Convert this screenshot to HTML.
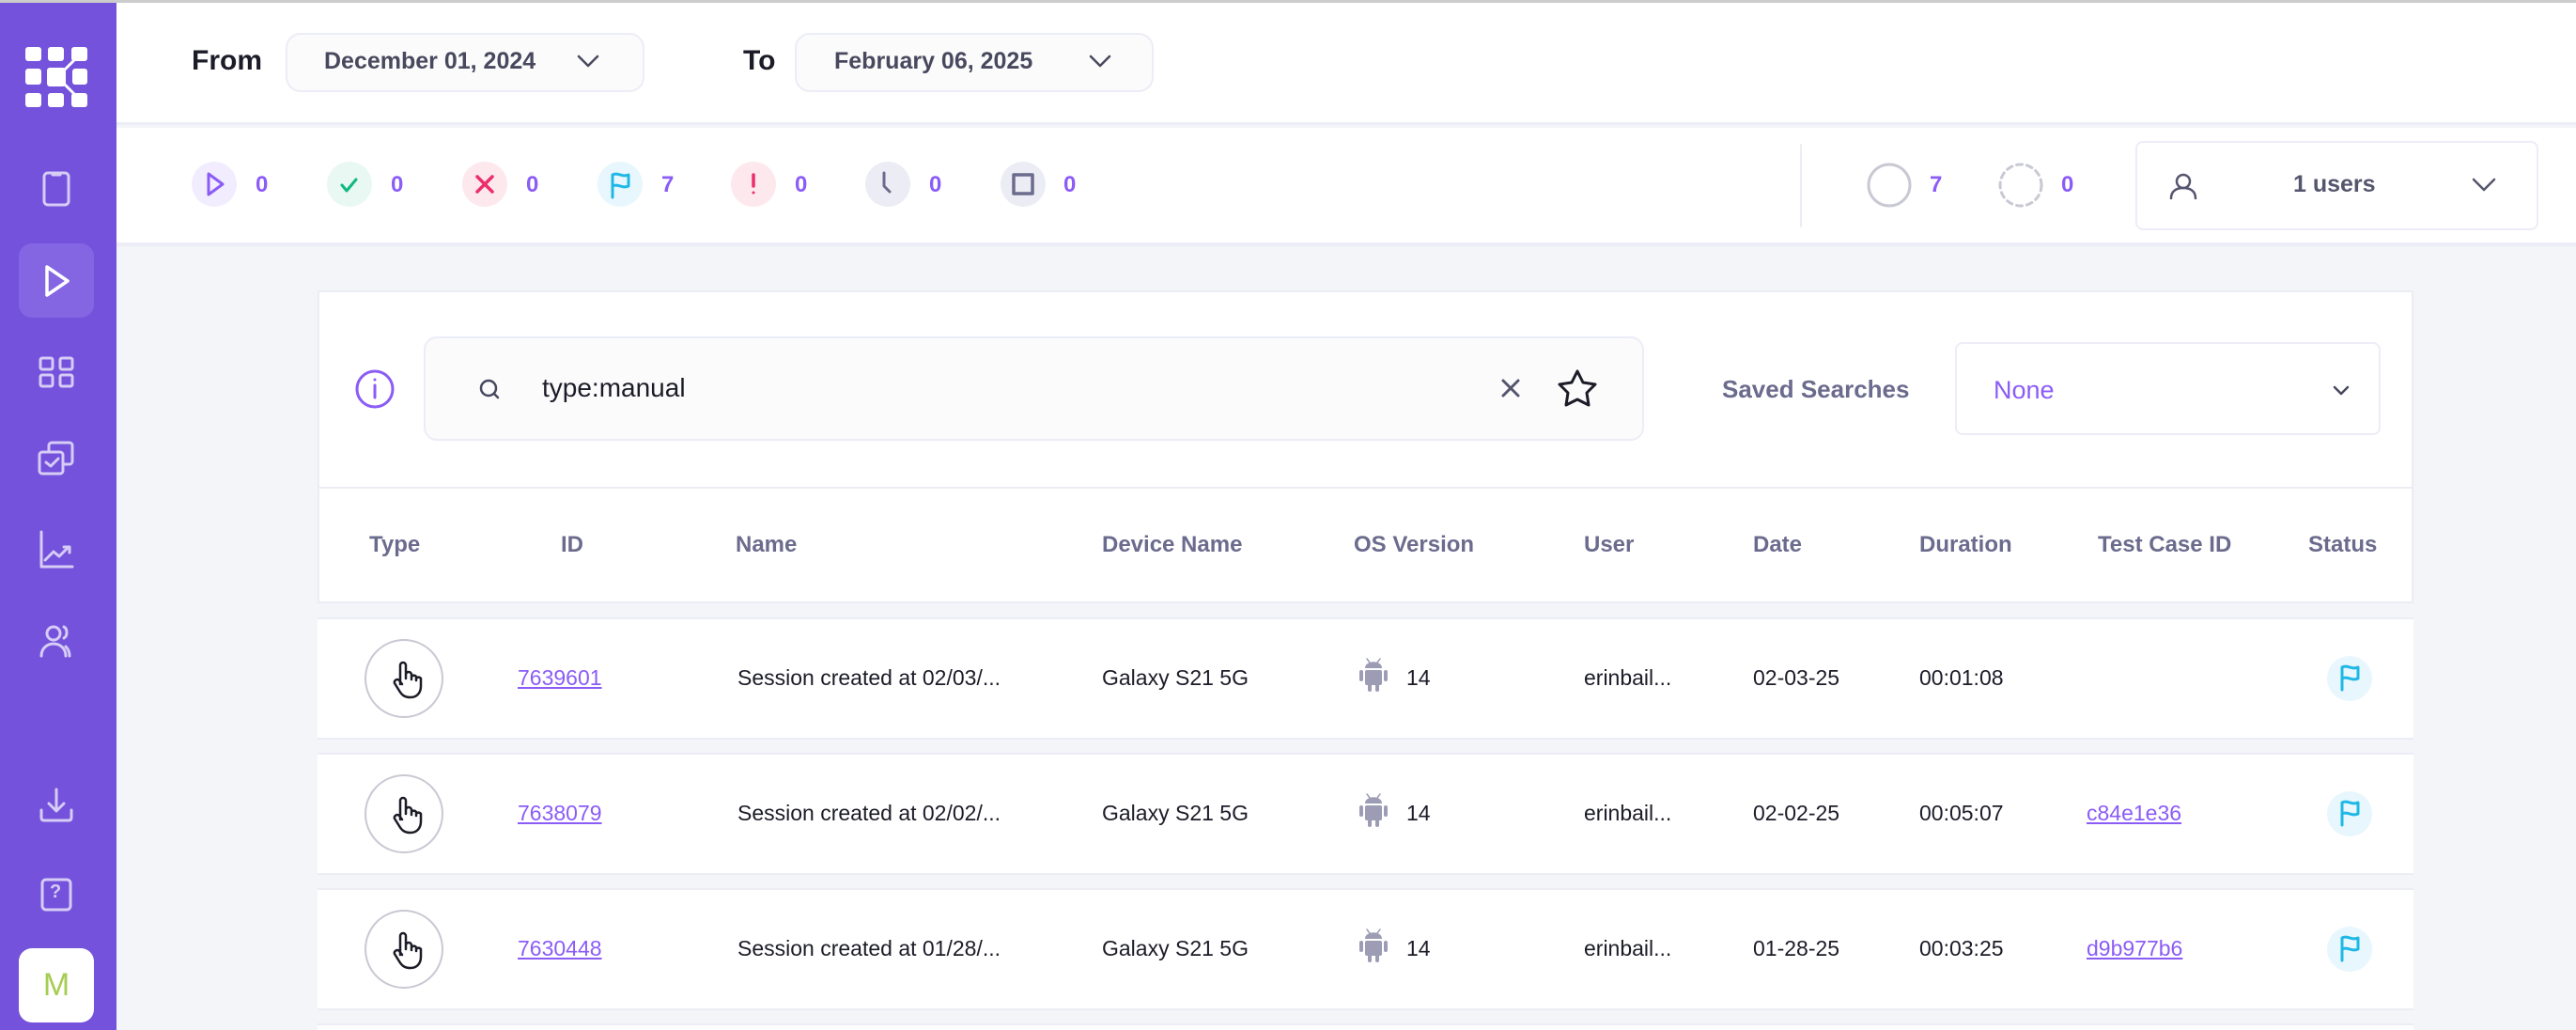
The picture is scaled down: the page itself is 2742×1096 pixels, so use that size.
<!DOCTYPE html>
<html style="width:2742px;height:1096px;overflow:hidden"><head><meta charset="utf-8"><style>
*{margin:0;padding:0;box-sizing:border-box}
body{width:2742px;height:1096px;overflow:hidden;background:#F4F5F9;font-family:"Liberation Sans",sans-serif;position:relative}
.a{position:absolute}
.sb{left:0;top:0;width:124px;height:1096px;background:#7452DC}
.t{position:absolute;white-space:nowrap}
.hdr{color:#6B6B8E;font-weight:bold;font-size:24px;top:566px}
.cell{font-size:23px;color:#1c1c28}
.lnk{color:#8B5CF6;text-decoration:underline;font-size:23px}
.row{position:absolute;left:338px;width:2231px;height:130px;background:#fff;border-top:2px solid #ECEDF4;border-bottom:2px solid #ECEDF4}
</style></head><body>
<div class="a" style="left:0;top:0;width:2742px;height:3px;background:#ccc;z-index:5"></div>
<div class="a" style="left:124px;top:0;width:2618px;height:133px;background:#fff;border-bottom:3px solid #ECEDF6"></div>
<div class="a" style="left:124px;top:136px;width:2618px;height:126px;background:#fff;border-bottom:4px solid #ECEDF6"></div>
<div class="a sb"></div>
<svg class="a" style="left:25px;top:48px" width="70" height="68" viewBox="0 0 70 68" fill="#fff">
<rect x="2" y="2" width="17" height="15" rx="3"/><rect x="26" y="2" width="17" height="15" rx="3"/><rect x="51" y="2" width="17" height="15" rx="3"/>
<rect x="2" y="25" width="17" height="17" rx="3"/><rect x="25" y="24" width="20" height="20" rx="3"/><rect x="52" y="25" width="16" height="17" rx="3"/>
<rect x="2" y="51" width="17" height="15" rx="3"/><rect x="26" y="51" width="17" height="15" rx="3"/><rect x="51" y="51" width="17" height="15" rx="3"/>
<path d="M44 26 L56 14 M44 42 L56 54" stroke="#fff" stroke-width="3"/></svg>
<svg class="a" style="left:0;top:0" width="124" height="1096" fill="none" stroke="#D6CCF6" stroke-width="3" stroke-linecap="round" stroke-linejoin="round">
<rect x="47" y="184" width="26" height="34" rx="4"/><path d="M56 186h8"/>
<rect x="20" y="259" width="80" height="79" rx="14" fill="#8466E2" stroke="none"/>
<path d="M50 284 L72 299 L50 314 Z" stroke="#fff" stroke-width="3.5"/>
<rect x="43" y="381" width="13" height="12" rx="2"/><rect x="64" y="381" width="13" height="12" rx="2"/><rect x="43" y="399" width="13" height="12" rx="2"/><rect x="64" y="399" width="13" height="12" rx="2"/>
<rect x="52" y="471" width="25" height="23" rx="3"/><rect x="42" y="481" width="25" height="23" rx="3" fill="#7452DC"/><path d="M49 492l5 4 8-8"/>
<path d="M44 566v37h33M48 596l9-9 6 5 10-10M68 582h6v6"/>
<circle cx="57" cy="674" r="7"/><path d="M44 698c0-8 6-13 13-13s13 5 13 13M68 667c4 2 4 10 0 12M74 698c0-5-2-8-4-10"/>
<path d="M60 840v22M52 855l8 8 8-8M44 862v8c0 2 1 3 3 3h26c2 0 3-1 3-3v-8"/>
<rect x="45" y="936" width="30" height="32" rx="4"/>
</svg>
<div class="t" style="left:53px;top:938px;font-size:20px;color:#D6CCF6;font-weight:bold">?</div>
<div class="a" style="left:20px;top:1009px;width:80px;height:79px;background:#fff;border-radius:14px;color:#A6CC52;font-size:34px;text-align:center;line-height:79px">M</div>
<div class="t" style="left:204px;top:48px;font-size:30px;font-weight:bold;color:#1c1c28">From</div>
<div class="a" style="left:304px;top:35px;width:382px;height:63px;border:2px solid #ECEDF6;border-radius:16px;background:#FBFBFC"></div>
<div class="t" style="left:345px;top:51px;font-size:25px;font-weight:bold;color:#48485E">December 01, 2024</div>
<div class="t" style="left:791px;top:48px;font-size:30px;font-weight:bold;color:#1c1c28">To</div>
<div class="a" style="left:846px;top:35px;width:382px;height:63px;border:2px solid #ECEDF6;border-radius:16px;background:#FBFBFC"></div>
<div class="t" style="left:888px;top:51px;font-size:25px;font-weight:bold;color:#48485E">February 06, 2025</div>
<svg class="a" style="left:0;top:0" width="2742" height="262" fill="none" stroke-linecap="round" stroke-linejoin="round">
<path d="M616 60l10 10 10-10M1161 60l10 10 10-10" stroke="#48485E" stroke-width="2.5"/>
<circle cx="228" cy="196" r="24" fill="#F1EDFE"/><path d="M222 185v22l15-11z" stroke="#8B5CF6" stroke-width="3"/>
<circle cx="372" cy="196" r="24" fill="#E9F8F2"/><path d="M364 197l5 6 10-12" stroke="#10B981" stroke-width="3"/>
<circle cx="516" cy="196" r="24" fill="#FDE8EE"/><path d="M508 188l16 16M524 188l-16 16" stroke="#EC2E6A" stroke-width="3.5"/>
<circle cx="660" cy="196" r="24" fill="#E8F7FD"/><path d="M652 210v-24c6-3 10 3 17 0v12c-7 3-11-3-17 0" stroke="#1FB8E6" stroke-width="3"/>
<circle cx="802" cy="196" r="24" fill="#FDE8EE"/><path d="M802 186v12" stroke="#EC2E6A" stroke-width="3.5"/><circle cx="802" cy="205" r="1.5" fill="#EC2E6A"/>
<circle cx="945" cy="196" r="24" fill="#ECEDF4"/><path d="M941 184v14l6 6" stroke="#6B6B8E" stroke-width="3"/>
<circle cx="1089" cy="196" r="24" fill="#ECEDF4"/><rect x="1079" y="186" width="20" height="20" stroke="#6B6B8E" stroke-width="3.5"/>
<path d="M1917 154v87" stroke="#ECEDF4" stroke-width="2"/>
<circle cx="2011" cy="197" r="22" stroke="#C8C9D3" stroke-width="3"/>
<circle cx="2151" cy="197" r="22" stroke="#C8C9D3" stroke-width="3" stroke-dasharray="6 5"/>
<circle cx="2324" cy="193" r="7" stroke="#55556E" stroke-width="2.5"/><path d="M2311 211c0-8 6-11 13-11s13 3 13 11" stroke="#55556E" stroke-width="2.5"/>
<path d="M2633 191l11 11 11-11" stroke="#55556E" stroke-width="2.5"/>
</svg>
<div class="t" style="left:272px;top:183px;font-size:24px;font-weight:bold;color:#8B5CF6">0</div>
<div class="t" style="left:416px;top:183px;font-size:24px;font-weight:bold;color:#8B5CF6">0</div>
<div class="t" style="left:560px;top:183px;font-size:24px;font-weight:bold;color:#8B5CF6">0</div>
<div class="t" style="left:704px;top:183px;font-size:24px;font-weight:bold;color:#8B5CF6">7</div>
<div class="t" style="left:846px;top:183px;font-size:24px;font-weight:bold;color:#8B5CF6">0</div>
<div class="t" style="left:989px;top:183px;font-size:24px;font-weight:bold;color:#8B5CF6">0</div>
<div class="t" style="left:1132px;top:183px;font-size:24px;font-weight:bold;color:#8B5CF6">0</div>
<div class="t" style="left:2054px;top:183px;font-size:24px;font-weight:bold;color:#8B5CF6">7</div>
<div class="t" style="left:2194px;top:183px;font-size:24px;font-weight:bold;color:#8B5CF6">0</div>
<div class="a" style="left:2273px;top:150px;width:429px;height:95px;border:2px solid #ECEDF6;border-radius:8px"></div>
<div class="t" style="left:2441px;top:182px;font-size:25px;font-weight:bold;color:#55556E">1 users</div>
<div class="a" style="left:338px;top:309px;width:2231px;height:333px;background:#fff;border:2px solid #ECEDF4"></div>
<div class="a" style="left:338px;top:518px;width:2231px;height:2px;background:#ECEDF4"></div>
<svg class="a" style="left:0;top:300px" width="2742" height="200" fill="none" stroke-linecap="round" stroke-linejoin="round">
<circle cx="399" cy="114" r="19" stroke="#8B5CF6" stroke-width="3"/><path d="M399 110v13" stroke="#8B5CF6" stroke-width="3"/><circle cx="399" cy="104" r="1.5" fill="#8B5CF6"/>
</svg>
<div class="a" style="left:451px;top:358px;width:1299px;height:111px;background:#FBFBFC;border:2px solid #ECEDF6;border-radius:14px"></div>
<svg class="a" style="left:0;top:300px" width="2742" height="200" fill="none" stroke-linecap="round" stroke-linejoin="round">
<circle cx="520" cy="113" r="8" stroke="#48485E" stroke-width="2.5"/><path d="M526 119l4 4" stroke="#48485E" stroke-width="2.5"/>
<path d="M1600 105l16 16M1616 105l-16 16" stroke="#55556E" stroke-width="3"/>
<path d="M1679 95l6 12 13 2-9 9 2 13-12-6-12 6 2-13-9-9 13-2z" stroke="#1c1c28" stroke-width="3"/>
<path d="M2485 112l7 7 7-7" stroke="#48485E" stroke-width="2.5"/>
</svg>
<div class="t" style="left:577px;top:397px;font-size:28px;color:#1c1c28">type:manual</div>
<div class="t" style="left:1833px;top:399px;font-size:26px;font-weight:bold;color:#6B6B8E">Saved Searches</div>
<div class="a" style="left:2081px;top:364px;width:453px;height:99px;border:2px solid #ECEDF6;border-radius:8px"></div>
<div class="t" style="left:2122px;top:400px;font-size:27px;color:#8B5CF6">None</div>
<div class="t hdr" style="left:393px">Type</div>
<div class="t hdr" style="left:597px">ID</div>
<div class="t hdr" style="left:783px">Name</div>
<div class="t hdr" style="left:1173px">Device Name</div>
<div class="t hdr" style="left:1441px">OS Version</div>
<div class="t hdr" style="left:1686px">User</div>
<div class="t hdr" style="left:1866px">Date</div>
<div class="t hdr" style="left:2043px">Duration</div>
<div class="t hdr" style="left:2233px">Test Case ID</div>
<div class="t hdr" style="left:2457px">Status</div>
<div class="row" style="top:657px"></div>
<div class="row" style="top:801px"></div>
<div class="row" style="top:945px"></div>
<div class="a" style="left:338px;top:1089px;width:2231px;height:7px;background:#fff;border-top:2px solid #ECEDF4"></div>
<svg class="a" style="left:0;top:0" width="2742" height="1096" fill="none" stroke-linecap="round" stroke-linejoin="round">
<g id="r1">
<circle cx="430" cy="722" r="41" stroke="#C8C9D3" stroke-width="2"/>
<path d="M426 728v-20a3 3 0 0 1 6 0v14m0-4a3 3 0 0 1 6 0v5m0-3a3 3 0 0 1 5 0v4m0-2a3 3 0 0 1 5 0v8c0 8-5 12-11 12s-9-2-12-7l-5-8a3 3 0 0 1 5-3l3 4" stroke="#1c1c28" stroke-width="2.5"/>
<g fill="#9C9DB5">
<path d="M1453 711c0-9 18-9 18 0z"/>
<rect x="1453" y="713" width="18" height="16" rx="2"/>
<rect x="1447" y="713" width="4" height="12" rx="2"/><rect x="1473" y="713" width="4" height="12" rx="2"/>
<rect x="1456" y="727" width="4" height="9" rx="2"/><rect x="1464" y="727" width="4" height="9" rx="2"/>
</g>
<path d="M1455 701l3 4M1469 701l-3 4" stroke="#9C9DB5" stroke-width="1.5"/>
<circle cx="2501" cy="722" r="24" fill="#E8F7FD"/><path d="M2493 734v-24c6-3 10 3 17 0v12c-7 3-11-3-17 0" stroke="#1FB8E6" stroke-width="3"/>
</g>
<use href="#r1" y="144"/><use href="#r1" y="288"/>
</svg>
<div class="t lnk" style="left:551px;top:708px">7639601</div>
<div class="t cell" style="left:785px;top:708px">Session created at 02/03/...</div>
<div class="t cell" style="left:1173px;top:708px">Galaxy S21 5G</div>
<div class="t cell" style="left:1497px;top:708px">14</div>
<div class="t cell" style="left:1686px;top:708px">erinbail...</div>
<div class="t cell" style="left:1866px;top:708px">02-03-25</div>
<div class="t cell" style="left:2043px;top:708px">00:01:08</div>
<div class="t lnk" style="left:551px;top:852px">7638079</div>
<div class="t cell" style="left:785px;top:852px">Session created at 02/02/...</div>
<div class="t cell" style="left:1173px;top:852px">Galaxy S21 5G</div>
<div class="t cell" style="left:1497px;top:852px">14</div>
<div class="t cell" style="left:1686px;top:852px">erinbail...</div>
<div class="t cell" style="left:1866px;top:852px">02-02-25</div>
<div class="t cell" style="left:2043px;top:852px">00:05:07</div>
<div class="t lnk" style="left:2221px;top:852px">c84e1e36</div>
<div class="t lnk" style="left:551px;top:996px">7630448</div>
<div class="t cell" style="left:785px;top:996px">Session created at 01/28/...</div>
<div class="t cell" style="left:1173px;top:996px">Galaxy S21 5G</div>
<div class="t cell" style="left:1497px;top:996px">14</div>
<div class="t cell" style="left:1686px;top:996px">erinbail...</div>
<div class="t cell" style="left:1866px;top:996px">01-28-25</div>
<div class="t cell" style="left:2043px;top:996px">00:03:25</div>
<div class="t lnk" style="left:2221px;top:996px">d9b977b6</div>
</body></html>
